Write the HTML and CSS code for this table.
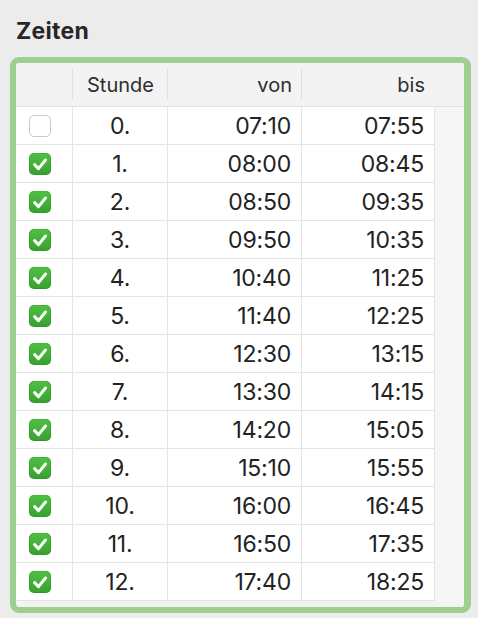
FILE: index.html
```html
<!DOCTYPE html>
<html lang="de">
<head>
<meta charset="utf-8">
<title>Zeiten</title>
<link rel="stylesheet" href="styles.css">
</head>
<body>
<h1 class="title">Zeiten</h1>
<div class="frame">
  <div class="table">
    <div class="row head">
      <div class="cell c-check"></div>
      <div class="cell c-num"><span class="hd">Stunde</span></div>
      <div class="cell c-time"><span class="hd">von</span></div>
      <div class="cell c-time"><span class="hd">bis</span></div>
      <div class="cell c-rest"></div>
    </div>
  </div>
</div>
<script src="app.js"></script>
</body>
</html>
```

FILE: app.js
```js
const rows = [
  [false,"0.","07:10","07:55"],
  [true,"1.","08:00","08:45"],
  [true,"2.","08:50","09:35"],
  [true,"3.","09:50","10:35"],
  [true,"4.","10:40","11:25"],
  [true,"5.","11:40","12:25"],
  [true,"6.","12:30","13:15"],
  [true,"7.","13:30","14:15"],
  [true,"8.","14:20","15:05"],
  [true,"9.","15:10","15:55"],
  [true,"10.","16:00","16:45"],
  [true,"11.","16:50","17:35"],
  [true,"12.","17:40","18:25"]
];
const table = document.querySelector('.table');
const check = '<svg viewBox="0 0 22 22" width="22" height="22"><path d="M5.6 11.6l3.9 4 7-8.6" fill="none" stroke="#fff" stroke-width="3" stroke-linecap="round" stroke-linejoin="round"/></svg>';
for (const [on, n, a, b] of rows) {
  const r = document.createElement('div');
  r.className = 'row body';
  r.innerHTML =
    '<div class="cell c-check"><span class="box' + (on ? ' on' : '') + '">' + (on ? check : '') + '</span></div>' +
    '<div class="cell c-num">' + n + '</div>' +
    '<div class="cell c-time">' + a + '</div>' +
    '<div class="cell c-time">' + b + '</div>' +
    '<div class="cell c-rest"></div>';
  table.appendChild(r);
}
```

FILE: styles.css
```css
html, body {
  margin: 0;
  padding: 0;
  background: #ececec;
}
body {
  width: 478px;
  height: 618px;
  overflow: hidden;
  font-family: Inter, "Noto Sans", sans-serif;
  color: #222;
}
.title {
  margin: 0;
  padding: 18px 0 0 16px;
  height: 57px;
  box-sizing: border-box;
  font-size: 23px;
  line-height: 26px;
  font-weight: 700;
  letter-spacing: 0.3px;
  color: #262626;
}
.frame {
  margin: 0 0 0 10px;
  width: 461px;
  height: 556px;
  box-sizing: border-box;
  border: 6px solid #9ecf90;
  border-right-width: 7px;
  border-bottom-width: 6px;
  border-radius: 9px;
  background: #f3f3f3;
  overflow: hidden;
}
.table {
  display: flex;
  flex-direction: column;
}
.row {
  display: grid;
  grid-template-columns: 57px 95px 134px 133px 1fr;
}
.row.head {
  height: 44px;
  background: #f3f3f3;
  border-bottom: 1px solid #e2e2e2;
  box-sizing: border-box;
}
.row.body {
  height: 38px;
  box-sizing: border-box;
}
.cell {
  display: flex;
  align-items: center;
  box-sizing: border-box;
}
.head .cell {
  position: relative;
  font-size: 20px;
  color: #2e2e2e;
}
.head .cell:not(.c-rest)::after {
  content: "";
  position: absolute;
  right: 0;
  top: 6px;
  bottom: 6px;
  width: 1px;
  background: #e0e0e0;
}
.head .cell.c-time:nth-child(4)::after { display: none; }
.body .cell:not(.c-rest) {
  background: #fff;
  border-right: 1px solid #e4e4e4;
  border-bottom: 1px solid #e4e4e4;
}
.body .cell.c-rest {
  background: #f6f6f6;
}
.body .cell {
  font-size: 23px;
  letter-spacing: -0.2px;
  color: #222;
}
.c-check {
  padding-left: 13px;
}
.c-num {
  justify-content: center;
}
.c-time {
  justify-content: flex-end;
  padding-right: 10px;
}
.head .c-num, .head .c-time { padding-top: 1px; }
.box {
  width: 22px;
  height: 22px;
  box-sizing: border-box;
  border-radius: 5px;
  border: 1px solid #c9c9c9;
  background: #fff;
  display: block;
}
.box.on {
  border: none;
  background: linear-gradient(#4fc142, #37a130);
  box-shadow: inset 0 0 0 1px rgba(40,120,30,0.25);
}
.box svg { display: block; }
```
